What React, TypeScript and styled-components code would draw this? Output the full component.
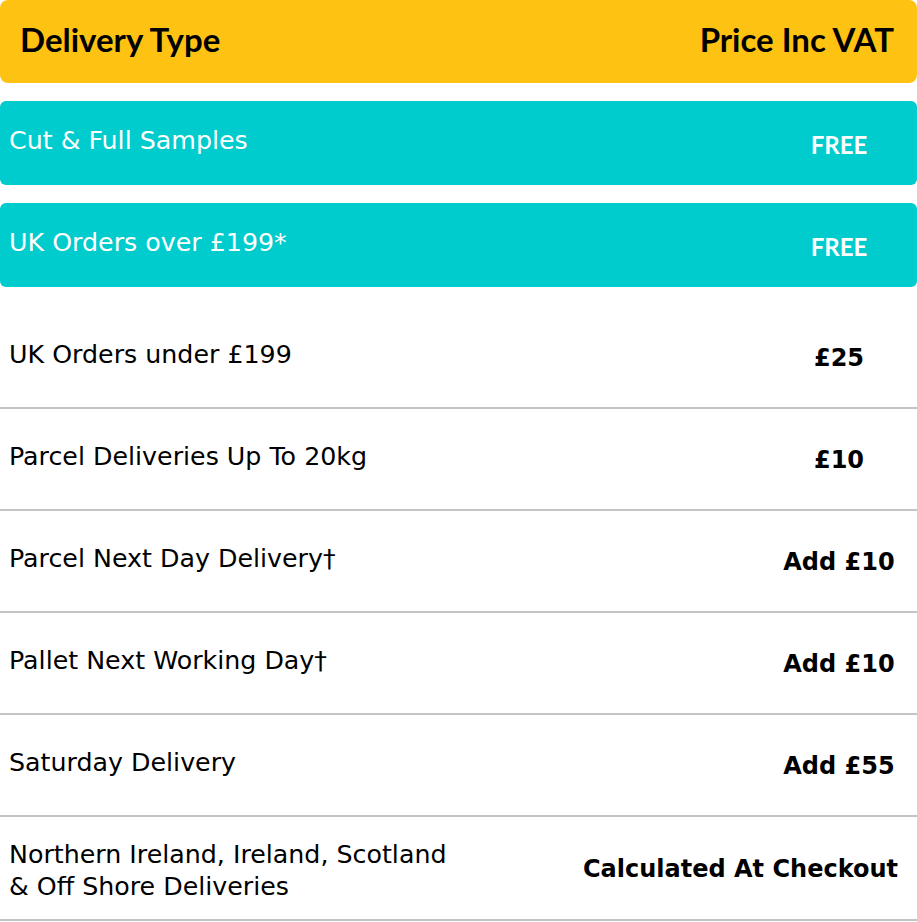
import React from "react";
import styled, { createGlobalStyle } from "styled-components";

const GlobalStyle = createGlobalStyle`
  html, body { margin: 0; padding: 0; background: #ffffff; }
  body { font-family: "DejaVu Sans", sans-serif; color: #000; }
`;

const Table = styled.div`
  width: 917px;
  display: flex;
  flex-direction: column;
`;

const HeaderBar = styled.div`
  height: 83px;
  background: #fec312;
  border-radius: 8px;
  display: flex;
  align-items: center;
  justify-content: space-between;
  padding: 0 23px 0 20px;
  box-sizing: border-box;
  margin-bottom: 18px;
`;

const HeaderText = styled.span`
  font-family: "Lato", sans-serif;
  font-weight: 700;
  font-size: 33px;
  line-height: 1;
  color: #000;
  padding-bottom: 4px;
`;

const Band = styled.div`
  height: 84px;
  background: #00cccd;
  border-radius: 6px;
  display: flex;
  align-items: center;
  justify-content: space-between;
  box-sizing: border-box;
  padding: 0 19px 0 9px;
  margin-bottom: 18px;
`;

const Rows = styled.div`
  display: flex;
  flex-direction: column;
  margin-top: 2px;
`;

const Row = styled.div<{ $tall?: boolean }>`
  height: ${(p) => (p.$tall ? 104 : 102)}px;
  border-bottom: 2px solid #c4c4c4;
  box-sizing: border-box;
  display: flex;
  align-items: center;
  justify-content: space-between;
  padding: 0 19px 0 9px;
`;

const Description = styled.div<{ $light?: boolean; $multi?: boolean }>`
  font-family: "DejaVu Sans", sans-serif;
  font-size: 25.3px;
  line-height: 32px;
  color: ${(p) => (p.$light ? "#ffffff" : "#000000")};
  padding: ${(p) => (p.$multi ? "6px 0 0" : "0 0 5px")};
  white-space: nowrap;
`;

const Price = styled.div<{ $light?: boolean }>`
  min-width: 118px;
  text-align: center;
  white-space: nowrap;
  font-family: ${(p) => (p.$light ? '"Lato", sans-serif' : '"DejaVu Sans", sans-serif')};
  font-weight: 700;
  font-size: 24px;
  line-height: 30px;
  color: ${(p) => (p.$light ? "#ffffff" : "#000000")};
  padding-top: ${(p) => (p.$light ? 3 : 1)}px;
`;

const highlighted = [
  { label: "Cut & Full Samples", price: "FREE" },
  { label: "UK Orders over £199*", price: "FREE" },
];

const rows = [
  { label: "UK Orders under £199", price: "£25" },
  { label: "Parcel Deliveries Up To 20kg", price: "£10" },
  { label: "Parcel Next Day Delivery†", price: "Add £10" },
  { label: "Pallet Next Working Day†", price: "Add £10" },
  { label: "Saturday Delivery", price: "Add £55" },
];

export default function App() {
  return (
    <>
      <GlobalStyle />
      <Table>
        <HeaderBar>
          <HeaderText>Delivery Type</HeaderText>
          <HeaderText>Price Inc VAT</HeaderText>
        </HeaderBar>
        {highlighted.map((h) => (
          <Band key={h.label}>
            <Description $light>{h.label}</Description>
            <Price $light>{h.price}</Price>
          </Band>
        ))}
        <Rows>
          {rows.map((r) => (
            <Row key={r.label}>
              <Description>{r.label}</Description>
              <Price>{r.price}</Price>
            </Row>
          ))}
          <Row $tall>
            <Description $multi>
              Northern Ireland, Ireland, Scotland
              <br />& Off Shore Deliveries
            </Description>
            <Price>Calculated At Checkout</Price>
          </Row>
        </Rows>
      </Table>
    </>
  );
}
